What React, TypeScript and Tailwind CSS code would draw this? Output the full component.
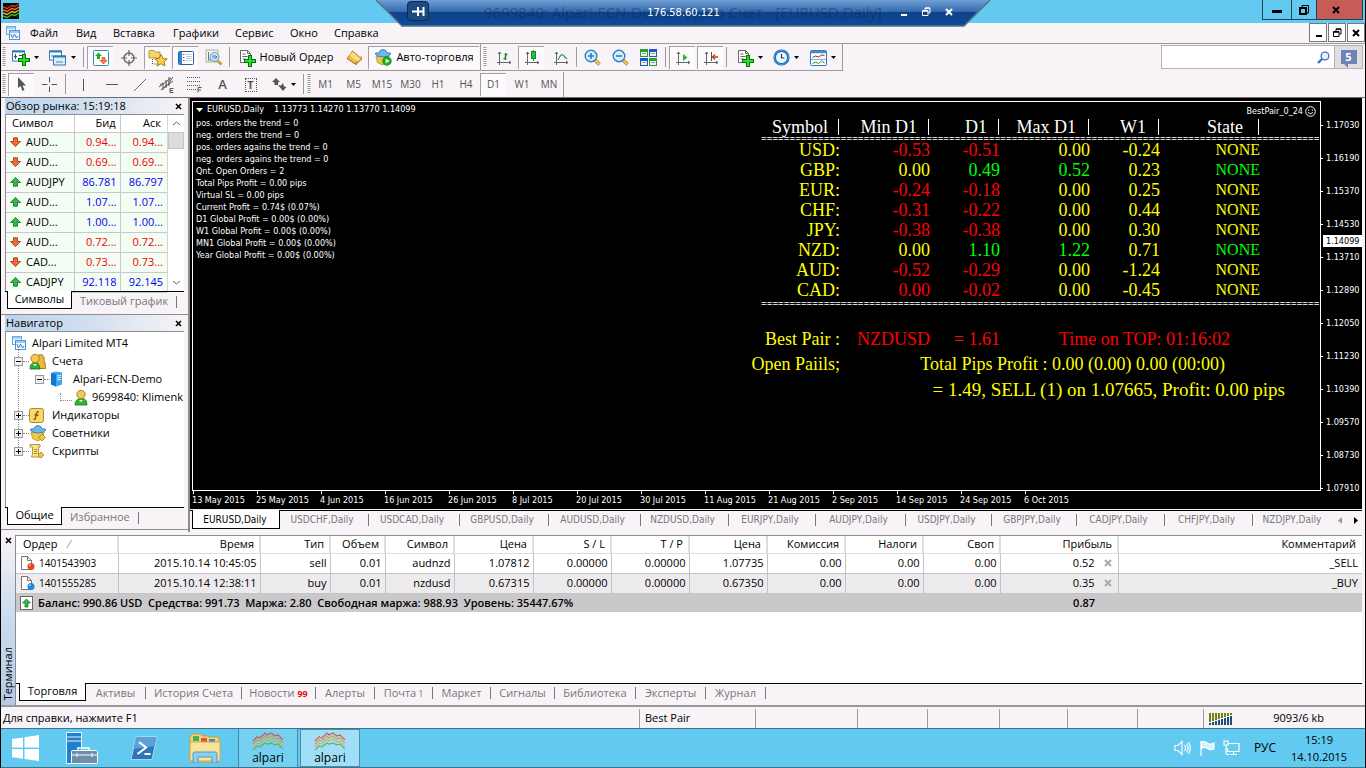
import React from "react";

type IconProps = { className?: string };

const svgBase = "shrink-0";

const ChartWindowsIcon = ({ className = "" }: IconProps) => (
  <svg viewBox="0 0 14 14" width="14" height="14" className={`${svgBase} ${className}`} fill="none">
    <rect x="0.5" y="0.5" width="9" height="8" fill="#e8f5ff" stroke="#6aaae4" />
    <path d="M0.5 2h9" stroke="#6aaae4" />
    <rect x="3.5" y="4.5" width="10" height="9" fill="#f4faff" stroke="#4a94d8" />
    <path d="M3.5 6h10" stroke="#4a94d8" />
    <path d="M5 8l1.500 4 2-4 2 4 1.500-2" stroke="#3c78d0" />
  </svg>
);

const NewChartIcon = () => (
  <svg viewBox="0 0 18 16" width="18" height="16" className={svgBase} fill="none">
    <rect x="0.500" y="1" width="12" height="10" fill="#fff" stroke="#2d7bb8" />
    <path d="M0.500 1.500h12" stroke="#2d7bb8" strokeWidth="2" />
    <path d="M3.500 4v5M2 6.500h3M7 5.500h3" stroke="#444" />
    <path d="M10 4h4v4h4v4h-4v4h-4v-4H6V8h4z" fill="#087008" />
    <path d="M11 5h2v4h4v2h-4v4h-2v-4H7V9h4z" fill="#2be02b" />
  </svg>
);

const ProfilesIcon = () => (
  <svg viewBox="0 0 18 16" width="18" height="16" className={svgBase} fill="none">
    <rect x="0.500" y="1" width="12" height="9" fill="#fff" stroke="#2d7bb8" />
    <path d="M0.500 1.500h12" stroke="#2d7bb8" strokeWidth="2" />
    <rect x="4.500" y="6" width="12" height="9" fill="#d9efff" stroke="#2d7bb8" />
    <path d="M4.500 6.500h12" stroke="#2d7bb8" strokeWidth="2" />
    <path d="M7 12h7M3 4.500v3" stroke="#5588aa" />
  </svg>
);

const MarketIcon = () => (
  <svg viewBox="0 0 16 16" width="16" height="16" className={svgBase} fill="none">
    <rect x="0.500" y="0.500" width="15" height="15" rx="1" fill="#fff" stroke="#2d86c8" />
    <path d="M5.500 2.500l3.500 3.500h-2v3h-3v-3h-2z" fill="#1fae1f" />
    <path d="M10.500 14l3.500-3.500h-2v-3h-3v3h-2z" fill="#ff7a3a" stroke="#c83a10" strokeWidth="0.600" />
  </svg>
);

const TargetIcon = () => (
  <svg viewBox="0 0 16 16" width="16" height="16" className={svgBase} fill="none" stroke="#666">
    <circle cx="8" cy="8" r="5" strokeWidth="1.500" />
    <path d="M8 0v6M8 10v6M0 8h6M10 8h6" strokeWidth="1.200" />
  </svg>
);

const FolderStarIcon = () => (
  <svg viewBox="0 0 20 18" width="20" height="18" className={svgBase}>
    <path d="M1 2.500q0-1 1-1h4l1 1.500h5v6h-11z" fill="#f6d669" stroke="#a8842a" strokeWidth="0.800" />
    <path d="M4.500 10v5h4" fill="none" stroke="#555" strokeDasharray="1 1" />
    <path d="M13 5.500l2 4 4.200.4-3.200 2.900 1 4.200-4-2.300-3.900 2.300 1-4.200-3.200-2.900 4.200-.4z" fill="#f8cf48" stroke="#9b7415" strokeWidth="0.900" />
  </svg>
);

const TerminalIcon = () => (
  <svg viewBox="0 0 16 14" width="16" height="14" className={svgBase} fill="none">
    <rect x="0.500" y="0.500" width="15" height="13" rx="1" fill="#fff" stroke="#1c62a8" />
    <path d="M2.500 1v12" stroke="#2d86d8" strokeWidth="3" />
    <path d="M5 3.500h1.500M5 6.500h1.500M5 9.500h1.500" stroke="#d02020" />
    <path d="M8 3.500h6M8 5.500h6M8 7.500h6M8 9.500h6" stroke="#b5cfe4" />
  </svg>
);

const TesterIcon = () => (
  <svg viewBox="0 0 18 17" width="18" height="17" className={svgBase} fill="none">
    <rect x="1" y="1" width="12" height="12" fill="#f2f2ee" stroke="#b3ad9a" />
    <path d="M3.500 3v8M3 11h9" stroke="#777" />
    <circle cx="9.500" cy="8" r="4.500" fill="#c5e6fb" fillOpacity=".8" stroke="#5d9dcc" />
    <path d="M8 9V6M10 10V6M11.500 9V7" stroke="#44749a" />
    <path d="M13 12l3.500 3.500" stroke="#c99a28" strokeWidth="2.500" />
  </svg>
);

const PagePlusIcon = () => (
  <svg viewBox="0 0 17 18" width="17" height="18" className={svgBase} fill="none">
    <path d="M1.500 1.500h7l3 3v9h-10z" fill="#fff" stroke="#666" />
    <path d="M8.500 1.500v3h3M3.500 5h3M3.500 7.500h5M3.500 10h3" stroke="#666" />
    <path d="M9 6h4v4h4v4h-4v4H9v-4H5v-4h4z" fill="#087008" />
    <path d="M10 7h2v4h4v2h-4v4h-2v-4H6v-2h4z" fill="#2be02b" />
  </svg>
);

const BookIcon = () => (
  <svg viewBox="0 0 17 16" width="17" height="16" className={svgBase}>
    <path d="M6.500 1l9.500 8-6 5.500-9-6z" fill="#f0bd45" stroke="#9a6c12" strokeWidth="0.800" />
    <path d="M1 8.500l9 6v-2.500l6-5.500" fill="none" stroke="#b07a18" />
    <path d="M6.500 2l8 6.500-3 3-8.500-6.500z" fill="#fbdb80" />
  </svg>
);

const HatIcon = ({ play = false }: { play?: boolean }) => (
  <svg viewBox="0 0 18 17" width="18" height="17" className={svgBase}>
    <path d="M2 7h13l-1.500 6.500-5 2.500-5-2.500z" fill="#f0c848" stroke="#aa8122" strokeWidth="0.700" />
    <path d="M5 4q.5-3.500 4-3.500t4 3.500q4-.6 4 .8-2 3.200-8 3.200t-8-3.200q0-1.400 4-.8z" fill="#6bb9e8" stroke="#2a78ac" strokeWidth="0.800" />
    {play && <circle cx="13" cy="12" r="4.300" fill="#17b01d" stroke="#08700c" strokeWidth="0.600" />}
    {play ? <path d="M11.700 9.700l4 2.300-4 2.300z" fill="#fff" /> : <path d="M13 9l3.500 3.500-3.500 3.500-3.500-3.500z" fill="#f5c53c" stroke="#a17510" strokeWidth="0.700" />}
  </svg>
);

const AxisIcon = ({ children }: { children: React.ReactNode }) => (
  <svg viewBox="0 0 16 16" width="16" height="16" className={svgBase} fill="none">
    <path d="M3.500 2v13M1 12.500h14M2 4l1.500-2 1.500 2M13 11l2 1.500-2 1.500" stroke="#666" />
    {children}
  </svg>
);

const MagnifierIcon = ({ plus = false }: { plus?: boolean }) => (
  <svg viewBox="0 0 17 17" width="17" height="17" className={svgBase} fill="none">
    <path d="M11 11l4.500 4.500" stroke="#a87714" strokeWidth="3.200" />
    <path d="M11 11l4.500 4.500" stroke="#f4cf50" strokeWidth="1.800" />
    <circle cx="7" cy="7" r="5.800" fill="#d2edfc" stroke="#2f83c8" strokeWidth="1.400" />
    <path d={plus ? "M4 7h6M7 4v6" : "M4 7h6"} stroke="#3c79ad" strokeWidth="1.600" />
  </svg>
);

const TilesIcon = () => (
  <svg viewBox="0 0 17 17" width="17" height="17" className={svgBase}>
    <rect x="0" y="0" width="8" height="8" fill="#2f9e2f" />
    <rect x="9" y="0" width="8" height="8" fill="#1f56c8" />
    <rect x="0" y="9" width="8" height="8" fill="#1f56c8" />
    <rect x="9" y="9" width="8" height="8" fill="#2f9e2f" />
    <path d="M1 3h6v4H1zM10 3h6v4h-6zM1 12h6v4H1zM10 12h6v4h-6z" fill="#e9f4e9" />
    <path d="M2 4.500h4M11 4.500h4M2 13.500h4M11 13.500h4" stroke="#8aa" />
  </svg>
);

const ClockIcon = () => (
  <svg viewBox="0 0 17 17" width="17" height="17" className={svgBase} fill="none">
    <circle cx="8.500" cy="8.500" r="6.800" fill="#eef8ff" stroke="#1468c0" strokeWidth="2.600" />
    <circle cx="8.500" cy="8.500" r="7" stroke="#54aaf0" strokeWidth="0.800" />
    <path d="M8.500 5v4h3" stroke="#333" strokeWidth="1.200" />
  </svg>
);

const TemplateIcon = () => (
  <svg viewBox="0 0 17 16" width="17" height="16" className={svgBase} fill="none">
    <rect x="0.500" y="0.500" width="16" height="15" rx="1" fill="#fff" stroke="#2d7bb8" />
    <path d="M1 2h15" stroke="#3f8fd0" strokeWidth="2.500" />
    <path d="M1 9.500h15" stroke="#7ab0d8" />
    <path d="M2.500 7.500l3-1.500 3 1 3-2 3 .5" stroke="#a02020" />
    <path d="M2.500 13.500l3-1.500 3 1.500 3-2.500 3 2" stroke="#1f8f2f" />
  </svg>
);

const UserIcon = ({ pair = false }: { pair?: boolean }) => (
  <svg viewBox="0 0 17 17" width="17" height="17" className={svgBase} strokeWidth="0.800">
    {pair && <path d="M8 15.500V9q-1-7 3.500-7.500 4.500.5 3.500 6 1.500 1.500 1.500 8z" fill="#eab83a" stroke="#8e6a14" />}
    <path d={pair ? "M1 16q0-6 4.500-6.500t5.500 6.500z" : "M3 16q0-6 6-6.500t6 6.500z"} fill="#2fb52f" stroke="#107010" />
    <circle cx={pair ? 6 : 9} cy="5.500" r="4.200" fill="#f4c94d" stroke="#94701a" />
    <path d={pair ? "M4 11l2 2 2-2" : "M7 11l2 2 2-2"} fill="#fff" />
  </svg>
);

const ServerIcon = () => (
  <svg viewBox="0 0 13 16" width="13" height="16" className={svgBase}>
    <path d="M1 2l4-1.500 7 1v12l-6 2-5-2z" fill="#3aa6f0" />
    <path d="M1 2l5 1v12.500l-5-2z" fill="#1478c8" />
    <path d="M7 5l4-.6M7 7l4-.6M7 9l4-.6" stroke="#e3f4ff" />
  </svg>
);

const FunctionIcon = () => (
  <svg viewBox="0 0 15 15" width="15" height="15" className={svgBase}>
    <rect x="0.500" y="0.500" width="14" height="14" rx="2" fill="#f7d868" stroke="#b08b25" />
    <path d="M10 4q-2.200-1-2.500 1.500l-1 4.500q-.4 1.700-2 1.300M5.500 7h4" fill="none" stroke="#7a5a10" strokeWidth="1.300" />
  </svg>
);

const ScriptIcon = () => (
  <svg viewBox="0 0 16 16" width="16" height="16" className={svgBase} fill="none">
    <path d="M1 1.500h10v2.500h-1.500v7h2v3h-9l1-3V4H1z" fill="#f9e08a" stroke="#b08b25" strokeWidth="0.900" />
    <path d="M5 6.500h3M5 8.500h3M5 10.500h3" stroke="#b08b25" />
    <path d="M12 9l3 3-3 3-3-3z" fill="#f5c53c" stroke="#a17510" strokeWidth="0.700" />
  </svg>
);

const OrderIcon = ({ color }: { color: string }) => (
  <svg viewBox="0 0 15 16" width="15" height="16" className={svgBase}>
    <path d="M1.500 1.500h6l4 4v9h-10z" fill="#fff" stroke="#777" />
    <path d="M7.500 1.500v4h4" fill="none" stroke="#777" />
    <circle cx="11" cy="11.500" r="3.500" fill={color} />
    <circle cx="10" cy="10.300" r="1" fill="#fff" fillOpacity=".6" />
  </svg>
);

const ArrowIcon = ({ up }: { up: boolean }) => (
  <svg viewBox="0 0 11 10" width="11" height="10" className={svgBase}>
    {up
      ? <path d="M5.500.5l5 5h-3v3.700h-4V5.500h-3z" fill="#2fb94a" stroke="#0c6e1e" strokeWidth="0.800" />
      : <path d="M5.500 9.500l5-5h-3V.8h-4v3.700h-3z" fill="#f06a3a" stroke="#9c2c0a" strokeWidth="0.800" />}
  </svg>
);

const Caret = () => (
  <svg viewBox="0 0 5 3" width="5" height="3" className={svgBase}>
    <path d="M0 0h5l-2.500 3z" fill="#000" />
  </svg>
);

const WaveLogo = () => (
  <svg viewBox="0 0 16 16" width="16" height="16" className={svgBase} fill="none" strokeWidth="1.400">
    <rect width="16" height="16" fill="#120c04" />
    <path d="M0 4l4 1.500 5-3 3 1 4-2.500" stroke="#e03020" />
    <path d="M0 7l4 1.500 5-3 3 1 4-2.500" stroke="#f07020" />
    <path d="M0 10l4 1.500 5-3 3 1 4-2.500" stroke="#d8c020" />
    <path d="M0 13l4 1.500 5-3 3 1 4-2.500" stroke="#50b820" />
  </svg>
);

const AlpariLogo = () => (
  <svg viewBox="0 0 32 18" width="32" height="18" className={svgBase} fill="none" strokeWidth="1.200" strokeDasharray="2 .4">
    <path d="M1 9l4-4 3 1 5-5 2 2 4-2 4 3 3-1 5 5" stroke="#e0402c" />
    <path d="M1 12l4-4 3 1 5-5 2 2 4-2 4 3 3-1 5 5" stroke="#ee8a2c" />
    <path d="M1 15l4-4 3 1 5-5 2 2 4-2 4 3 3-1 5 5" stroke="#c9b63a" />
    <path d="M1 18l4-4 3 1 5-4 2 1 4-1 4 2 3-1 5 5" stroke="#5da83c" />
  </svg>
);

const CrossIcon = ({ className = "" }: IconProps) => (
  <svg viewBox="0 0 8 8" width="8" height="8" className={`${svgBase} ${className}`}>
    <path d="M1 1l6 6M7 1l-6 6" stroke="currentColor" strokeWidth="2" />
  </svg>
);

const RestoreIcon = ({ className = "" }: IconProps) => (
  <svg viewBox="0 0 9 9" width="9" height="9" className={`${svgBase} ${className}`} fill="none" stroke="currentColor">
    <path d="M3 3V1h5v5H6.500" />
    <path d="M.5 3.500h5.500v5H.5z" />
    <path d="M.5 4.200h5.500M3 1.200h5" strokeWidth="1.300" />
  </svg>
);

const MinimizeIcon = ({ className = "" }: IconProps) => (
  <svg viewBox="0 0 9 9" width="9" height="9" className={`${svgBase} ${className}`}>
    <path d="M2 8h6" stroke="currentColor" strokeWidth="2" />
  </svg>
);

const Sep = ({ className = "" }: IconProps) => <span className={`h-5 w-px shrink-0 bg-[#9c999c] ${className}`} />;

const Gripper = ({ className = "" }: IconProps) => (
  <svg viewBox="0 0 4 20" width="4" height="20" className={`${svgBase} ${className}`}>
    <path d="M2 0v20" stroke="#9c999c" strokeWidth="3" strokeDasharray="1 1" />
  </svg>
);

type ToolProps = { label: string; className?: string; pressed?: boolean; children: React.ReactNode };

const Tool = ({ label, className = "", pressed = false, children }: ToolProps) => (
  <button
    type="button"
    aria-label={label}
    aria-pressed={pressed}
    className={`flex h-[23px] shrink-0 items-center justify-center gap-1 border-l border-t whitespace-nowrap ${pressed ? "border-[#a3a0a3] bg-[#fcfafc]" : "border-transparent"} ${className}`}
  >
    {children}
  </button>
);

const TitleBar = () => (
  <header className="flex h-[23px] items-start justify-between bg-[#62caf0] pl-0.5">
    <div className="pt-[3px]"><WaveLogo /></div>
    <div className="mr-0.5 flex h-5 border border-t-0 border-[#23424f]">
      <button type="button" aria-label="Свернуть" className="flex w-7 items-center justify-center">
        <svg viewBox="0 0 10 9" width="10" height="9"><path d="M0 6.500h10" stroke="#000" strokeWidth="3" /></svg>
      </button>
      <button type="button" aria-label="Развернуть" className="flex w-6.5 items-center justify-center border-x border-[#23424f]">
        <svg viewBox="0 0 10 10" width="10" height="10" fill="none" stroke="#000">
          <path d="M3 2V.5h6.500V8H8" />
          <path d="M1 3h6v6H1z" strokeWidth="2" />
        </svg>
      </button>
      <button type="button" aria-label="Закрыть" className="flex w-[45px] items-center justify-center bg-[#c75c56] pr-2">
        <CrossIcon />
      </button>
    </div>
  </header>
);

const RemoteBar = () => (
  <div className="absolute left-1/2 top-0 h-[27px] w-[616px] -translate-x-1/2 text-white">
    <svg viewBox="0 0 616 27" className="absolute inset-0 h-full w-full">
      <defs>
        <linearGradient id="remote" x1="0" y1="0" x2="0" y2="1">
          <stop offset="0" stopColor="#6f9fd4" />
          <stop offset="0.45" stopColor="#3569ac" />
          <stop offset="0.47" stopColor="#0d4289" />
          <stop offset="1" stopColor="#0c4c96" />
        </linearGradient>
      </defs>
      <path d="M1 0l26 26h562l26-26z" fill="url(#remote)" />
      <path d="M1 0l26 26h562l26-26" fill="none" stroke="#5c6f86" strokeWidth="1.500" />
    </svg>
    <div className="absolute inset-x-0 top-0 text-center text-[15px] leading-6 text-[#0a2450]/40">
      9699840: Alpari-ECN-Demo - Демо Счет - [EURUSD,Daily]
    </div>
    <button type="button" aria-label="Закрепить" className="absolute left-8 top-px flex h-5 w-[22px] items-center justify-center rounded-sm border border-[#0a2a50] bg-[#1d4a80]">
      <svg viewBox="0 0 13 11" width="13" height="11" fill="none" stroke="#fff" strokeWidth="2">
        <path d="M0 5.500h5M6 1v9M6 5.500h6M11.500 1v9" />
      </svg>
    </button>
    <div className="absolute inset-x-0 top-0 pl-px text-center font-['DejaVu_Sans_Condensed',sans-serif] text-[11px] leading-[25px]">
      176.58.60.121
    </div>
    <div className="absolute right-[38px] top-[7px] flex gap-[14px]">
      <button type="button" aria-label="Свернуть сеанс"><MinimizeIcon /></button>
      <button type="button" aria-label="Окно сеанса"><RestoreIcon /></button>
      <button type="button" aria-label="Закрыть сеанс"><CrossIcon /></button>
    </div>
  </div>
);

const menus = [
  { name: "Файл", className: "w-[46px]" },
  { name: "Вид", className: "w-[37px]" },
  { name: "Вставка", className: "w-[60px]" },
  { name: "Графики", className: "w-[62px]" },
  { name: "Сервис", className: "w-[55px]" },
  { name: "Окно", className: "w-[44px]" },
  { name: "Справка", className: "w-[60px]" },
];

const MenuBar = () => (
  <nav className="flex h-[21px] items-center border-b border-[#9c999c] pl-[5px]">
    <ChartWindowsIcon className="mr-[10px]" />
    {menus.map((menu) => (
      <button key={menu.name} type="button" className={`text-left text-[11px] whitespace-nowrap ${menu.className}`}>
        {menu.name}
      </button>
    ))}
    <div className="ml-auto flex gap-px self-start">
      <button type="button" aria-label="Свернуть график" className="flex h-[19px] w-[18px] items-center justify-center border border-[#777] bg-white"><MinimizeIcon /></button>
      <button type="button" aria-label="Окно графика" className="flex h-[19px] w-[18px] items-center justify-center border border-[#777] bg-white"><RestoreIcon /></button>
      <button type="button" aria-label="Закрыть график" className="flex h-[19px] w-[18px] items-center justify-center border border-[#777] bg-white"><CrossIcon /></button>
    </div>
  </nav>
);

const MainToolbar = () => (
  <div className="flex h-[27px] items-start">
    <div className="flex h-[27px] items-center border-r border-b border-[#9c999c] pr-px">
      <Gripper className="ml-px mr-0.5" />
      <Tool label="Новый график" className="w-[33px]"><NewChartIcon /><Caret /></Tool>
      <Tool label="Профили" className="w-[41px]"><ProfilesIcon /><Caret /></Tool>
      <Sep className="ml-px mr-[3px]" />
      <Tool label="Обзор рынка" pressed className="w-[26px]"><MarketIcon /></Tool>
      <Tool label="Окно данных" className="w-[31px]"><TargetIcon /></Tool>
      <Tool label="Навигатор" pressed className="mr-0.5 w-[26px]"><FolderStarIcon /></Tool>
      <Tool label="Терминал" pressed className="w-[26px]"><TerminalIcon /></Tool>
      <Tool label="Тестер стратегий" className="w-[31px]"><TesterIcon /></Tool>
      <Sep className="mr-0.5" />
      <Tool label="Новый Ордер" className="w-[107px]">
        <PagePlusIcon />
        <span className="text-[11px]">Новый Ордер</span>
      </Tool>
      <Tool label="MetaEditor" className="w-[29px]"><BookIcon /></Tool>
      <Tool label="Авто-торговля" pressed className="w-[111px]">
        <HatIcon play />
        <span className="text-[11px]">Авто-торговля</span>
      </Tool>
    </div>
    <div className="flex h-[27px] items-center border-r border-b border-[#9c999c]">
      <Gripper className="ml-0.5 mr-0.5" />
      <Tool label="Бары" className="mr-px w-[28px]">
        <AxisIcon><path d="M9.500 3v7M7.500 8.500h2M9.500 4.500h2" stroke="#188c28" strokeWidth="1.500" /></AxisIcon>
      </Tool>
      <Tool label="Свечи" pressed className="mr-0.5 w-[26px]">
        <AxisIcon><path d="M9.500 0v11" stroke="#188c28" /><rect x="7.500" y="1.500" width="4" height="7" fill="#22c03a" stroke="#188c28" /></AxisIcon>
      </Tool>
      <Tool label="Линия" className="w-[28px]">
        <AxisIcon><path d="M5 10q3-7 5-5t4 4" stroke="#2f9e4a" strokeWidth="1.200" /></AxisIcon>
      </Tool>
      <Sep className="ml-0.5 mr-px" />
      <Tool label="Увеличить" className="w-[28px]"><MagnifierIcon plus /></Tool>
      <Tool label="Уменьшить" className="w-[28px]"><MagnifierIcon /></Tool>
      <Tool label="Окна рядом" className="w-[28px]"><TilesIcon /></Tool>
      <Sep className="mr-[3px] ml-[3px]" />
      <Tool label="Автопрокрутка" pressed className="mr-0.5 w-[26px]">
        <AxisIcon><path d="M8 4l4.500 3.500-4.500 3.500z" fill="#25b83c" /></AxisIcon>
      </Tool>
      <Tool label="Сдвиг графика" pressed className="w-[26px]">
        <AxisIcon><path d="M8.500 2v9" stroke="#555" /><path d="M15 7h-5M12 4.500l-2.500 2.500 2.500 2.500" stroke="#c8401c" strokeWidth="1.400" /></AxisIcon>
      </Tool>
      <Sep className="ml-[3px] mr-[3px]" />
      <Tool label="Индикаторы" className="w-[38px]"><PagePlusIcon /><Caret /></Tool>
      <Tool label="Периоды" className="w-[35px]"><ClockIcon /><Caret /></Tool>
      <Tool label="Шаблоны" className="w-[39px]"><TemplateIcon /><Caret /></Tool>
    </div>
    <div className="ml-auto mr-0.5 mt-px flex h-6 border border-[#b5b2b5]">
      <label className="flex w-[172px] items-center bg-white pr-1">
        <input aria-label="Поиск" className="min-w-0 flex-1 px-1 text-[11px] outline-none" />
        <svg viewBox="0 0 13 13" width="13" height="13" fill="none" stroke="#3a6fd0">
          <circle cx="8" cy="5" r="3.800" fill="#eef6ff" strokeWidth="1.300" />
          <path d="M5 8l-4 4" strokeWidth="2.400" />
        </svg>
      </label>
      <button type="button" aria-label="Сообщения" className="flex w-7 items-center justify-center border-l border-[#b5b2b5] bg-[#e0dee0]">
        <span className="relative flex h-3.5 w-4 items-center justify-center bg-[#6d84b5] text-[11px] font-bold text-white">
          5
          <svg viewBox="0 0 4 4" width="4" height="4" className="absolute left-[3px] top-full"><path d="M0 0h4v4z" fill="#6d84b5" /></svg>
        </span>
      </button>
    </div>
  </div>
);

const periods = [
  { name: "M1", className: "w-[28px]" },
  { name: "M5", className: "w-[28px]" },
  { name: "M15", className: "w-[29px]" },
  { name: "M30", className: "w-[28px]" },
  { name: "H1", className: "w-[27px]" },
  { name: "H4", className: "w-[29px]" },
  { name: "D1", className: "w-[26px]" },
  { name: "W1", className: "w-[31px]" },
  { name: "MN", className: "w-[23px]" },
];

const LineToolbar = () => (
  <div className="flex h-[27px] items-center border-b border-[#6f6c6f] text-[#555]">
    <Gripper className="ml-px mr-0.5" />
    <Tool label="Курсор" pressed className="w-[26px]">
      <svg viewBox="0 0 10 15" width="10" height="15"><path d="M1 0v11l2.500-2 2 5 2-1-2-4.500h3.500z" fill="#555" /></svg>
    </Tool>
    <Tool label="Перекрестие" className="w-[30px]">
      <svg viewBox="0 0 15 15" width="15" height="15" stroke="#555"><path d="M7.500 0v5.500M7.500 9.500v5.500M0 7.500h5.500M9.500 7.500h5.500" /></svg>
    </Tool>
    <Sep className="ml-px mr-[3px]" />
    <Tool label="Вертикальная линия" className="w-[28px]"><svg viewBox="0 0 3 12" width="3" height="12" stroke="#555"><path d="M1.500 0v12" /></svg></Tool>
    <Tool label="Горизонтальная линия" className="w-[28px]"><svg viewBox="0 0 12 3" width="12" height="3" stroke="#555"><path d="M0 1.500h12" /></svg></Tool>
    <Tool label="Трендовая линия" className="w-[28px]"><svg viewBox="0 0 12 12" width="12" height="12" stroke="#666"><path d="M0 12L12 0" /></svg></Tool>
    <Tool label="Каналы" className="w-[27px]">
      <svg viewBox="0 0 16 17" width="16" height="17" fill="none" stroke="#555">
        <path d="M0 11L12 2M2 14L14 5M4 7v7M7 4v8M10 1v9M1 9l3-2M5 12l3-4M9 8l5-7" />
        <path d="M14.500 12.500h-3.500v4h3.500M11 14.500h3" />
      </svg>
    </Tool>
    <Tool label="Фибоначчи" className="w-[28px]">
      <svg viewBox="0 0 16 17" width="16" height="17" fill="none" stroke="#555">
        <path d="M0 1.500h14M0 5.500h14M0 9.500h14M0 13.500h9" strokeDasharray="1 1" />
        <path d="M14.500 11.500h-3.500v5M11 14h3" />
      </svg>
    </Tool>
    <Tool label="Текст" className="w-[28px]"><span className="text-[13px] font-semibold">A</span></Tool>
    <Tool label="Текстовая метка" className="w-[28px]">
      <span className="flex h-3.5 w-3 items-center justify-center border border-dotted border-[#555] text-[11px] font-bold leading-none">T</span>
    </Tool>
    <Tool label="Стрелки" className="w-[38px]">
      <svg viewBox="0 0 15 13" width="15" height="13" fill="#555">
        <path d="M4 0l4 4-2 .2V7H2.500V4.200L0 4z" /><path d="M6 7l3 .5L11 5l1 3.500 2.500.5-3.500 4-3-3.500z" />
      </svg>
      <Caret />
    </Tool>
    <Sep className="ml-px mr-[3px]" />
    <Gripper />
    {periods.map((period) => (
      <Tool key={period.name} label={period.name} pressed={period.name === "D1"} className={`text-[10px] ${period.className}`}>
        {period.name}
      </Tool>
    ))}
    <Sep className="ml-[3px] h-[25px]" />
  </div>
);

const quotes = [
  { symbol: "AUD...", bid: "0.94...", ask: "0.94...", up: false },
  { symbol: "AUD...", bid: "0.69...", ask: "0.69...", up: false },
  { symbol: "AUDJPY", bid: "86.781", ask: "86.797", up: true },
  { symbol: "AUD...", bid: "1.07...", ask: "1.07...", up: true },
  { symbol: "AUD...", bid: "1.00...", ask: "1.00...", up: true },
  { symbol: "AUD...", bid: "0.72...", ask: "0.72...", up: false },
  { symbol: "CAD...", bid: "0.73...", ask: "0.73...", up: false },
  { symbol: "CADJPY", bid: "92.118", ask: "92.145", up: true },
];

const PanelTitle = ({ title }: { title: string }) => (
  <div className="flex h-4 items-center justify-between bg-linear-to-r from-[#bcd3ec] via-[#d3e0ef] to-[#f7f3f7] pr-0.5 pl-px text-[11px]">
    <span>{title}</span>
    <button type="button" aria-label={`Закрыть: ${title}`}>
      <svg viewBox="0 0 7 7" width="7" height="7"><path d="M1 1l5 5M6 1l-5 5" stroke="#000" strokeWidth="1.600" /></svg>
    </button>
  </div>
);

const PanelTabs = ({ active, other, activeClass }: { active: string; other: string; activeClass: string }) => (
  <div className="flex h-5 items-start text-[11px]">
    <span className="h-px w-0.5 bg-black" />
    <button type="button" className={`h-[18px] border border-t-0 border-black bg-white ${activeClass}`}>{active}</button>
    <div className="flex h-5 flex-1 items-center border-t border-black pl-2 text-[#777]">
      <button type="button">{other}</button>
      <span className="ml-2 h-3 w-px bg-[#777]" />
    </div>
  </div>
);

const MarketWatch = () => (
  <section className="px-1">
    <PanelTitle title="Обзор рынка: 15:19:18" />
    <div className="flex h-[177px] border-t border-l border-[#8f8c8f] bg-white">
      <table className="flex-1 table-fixed border-collapse text-[11px]">
        <thead>
          <tr className="h-[17px]">
            <th className="w-[68px] border-r border-b border-[#c8c8c8] pl-1.5 text-left font-normal leading-4">Символ</th>
            <th className="w-[46px] border-r border-b border-[#c8c8c8] pr-1 text-right font-normal leading-4">Бид</th>
            <th className="w-[47px] border-b border-[#c8c8c8] pr-1.5 text-right font-normal leading-4">Аск</th>
          </tr>
        </thead>
        <tbody>
          {quotes.map((quote, i) => (
            <tr key={i} className="h-5 bg-[#f4fdf4]">
              <td className="border-r border-b border-[#c8c8c8] pl-1">
                <div className="flex items-center gap-[5px] leading-4"><ArrowIcon up={quote.up} />{quote.symbol}</div>
              </td>
              <td className={`border-r border-b border-[#c8c8c8] pr-[3px] text-right leading-4 ${quote.up ? "text-[#0000ee]" : "text-[#ee0000]"}`}>{quote.bid}</td>
              <td className={`border-b border-[#c8c8c8] pr-1 text-right leading-4 ${quote.up ? "text-[#0000ee]" : "text-[#ee0000]"}`}>{quote.ask}</td>
            </tr>
          ))}
        </tbody>
      </table>
      <div className="flex w-[17px] flex-col items-center justify-between border-l border-[#d5d5d5] py-1">
        <svg viewBox="0 0 9 9" width="9" height="9" fill="none" stroke="#666"><path d="M1 6l3.500-3 3.500 3" /></svg>
        <span className="mt-1 h-[17px] w-4 border border-[#c4c4c4] bg-[#dcdcdc]" />
        <span className="flex-1" />
        <svg viewBox="0 0 9 9" width="9" height="9" fill="none" stroke="#666"><path d="M1 3l3.500 3 3.500-3" /></svg>
      </div>
    </div>
    <PanelTabs active="Символы" other="Тиковый график" activeClass="w-[65px]" />
  </section>
);

const Expander = ({ open }: { open: boolean }) => (
  <button type="button" aria-label={open ? "Свернуть" : "Развернуть"} className="flex h-[9px] w-[9px] shrink-0 items-center justify-center border border-[#999] bg-[#f1f1f1]">
    <svg viewBox="0 0 5 5" width="5" height="5" stroke="#000"><path d={open ? "M0 2.500h5" : "M0 2.500h5M2.500 0v5"} /></svg>
  </button>
);

const Dots = () => <span className="w-1.5 shrink-0 border-t border-dotted border-[#888]" />;

const Navigator = () => (
  <section className="flex flex-1 flex-col px-1">
    <PanelTitle title="Навигатор" />
    <div className="relative flex-1 overflow-hidden border-t border-l border-[#8f8c8f] bg-white pt-0.5 text-[11px] whitespace-nowrap">
      <span className="absolute left-3 top-[18px] h-[101px] border-l border-dotted border-[#888]" />
      <div className="flex h-[18px] items-center gap-1.5 pl-1.5"><ChartWindowsIcon />Alpari Limited MT4</div>
      <div className="relative flex h-[18px] items-center pl-2"><Expander open /><Dots /><UserIcon pair /><span className="pl-1.5">Счета</span></div>
      <div className="flex h-[18px] items-center pl-[29px]"><Expander open /><Dots /><ServerIcon /><span className="pl-2.5">Alpari-ECN-Demo</span></div>
      <div className="flex h-[18px] items-center pl-[54px]"><span className="h-2 w-3 shrink-0 border-b border-l border-dotted border-[#888]" /><UserIcon /><span className="pl-[3px]">9699840: Klimenk</span></div>
      <div className="relative flex h-[18px] items-center pl-2"><Expander open={false} /><Dots /><FunctionIcon /><span className="pl-2">Индикаторы</span></div>
      <div className="relative flex h-[18px] items-center pl-2"><Expander open={false} /><Dots /><HatIcon /><span className="pl-[5px]">Советники</span></div>
      <div className="relative flex h-[18px] items-center pl-2"><Expander open={false} /><Dots /><ScriptIcon /><span className="pl-[7px]">Скрипты</span></div>
    </div>
    <PanelTabs active="Общие" other="Избранное" activeClass="w-[55px]" />
  </section>
);

const comments = [
  "pos. orders the trend = 0",
  "neg. orders the trend = 0",
  "pos. orders agains the trend = 0",
  "neg. orders agains the trend = 0",
  "Qnt. Open Orders = 2",
  "Total Pips Profit = 0.00 pips",
  "Virtual SL = 0.00 pips",
  "Current Profit = 0.74$ (0.07%)",
  "D1 Global Profit = 0.00$ (0.00%)",
  "W1 Global Profit = 0.00$ (0.00%)",
  "MN1 Global Profit = 0.00$ (0.00%)",
  "Year Global Profit = 0.00$ (0.00%)",
];

const YELLOW = "text-[#ffff00]";
const RED = "text-[#ff0000]";
const GREEN = "text-[#00ff00]";

const strengths = [
  { name: "USD:", min: "-0.53", minColor: RED, day: "-0.51", dayColor: RED, max: "0.00", maxColor: YELLOW, week: "-0.24", stateColor: YELLOW },
  { name: "GBP:", min: "0.00", minColor: YELLOW, day: "0.49", dayColor: GREEN, max: "0.52", maxColor: GREEN, week: "0.23", stateColor: GREEN },
  { name: "EUR:", min: "-0.24", minColor: RED, day: "-0.18", dayColor: RED, max: "0.00", maxColor: YELLOW, week: "0.25", stateColor: YELLOW },
  { name: "CHF:", min: "-0.31", minColor: RED, day: "-0.22", dayColor: RED, max: "0.00", maxColor: YELLOW, week: "0.44", stateColor: YELLOW },
  { name: "JPY:", min: "-0.38", minColor: RED, day: "-0.38", dayColor: RED, max: "0.00", maxColor: YELLOW, week: "0.30", stateColor: YELLOW },
  { name: "NZD:", min: "0.00", minColor: YELLOW, day: "1.10", dayColor: GREEN, max: "1.22", maxColor: GREEN, week: "0.71", stateColor: GREEN },
  { name: "AUD:", min: "-0.52", minColor: RED, day: "-0.29", dayColor: RED, max: "0.00", maxColor: YELLOW, week: "-1.24", stateColor: YELLOW },
  { name: "CAD:", min: "0.00", minColor: RED, day: "-0.02", dayColor: RED, max: "0.00", maxColor: YELLOW, week: "-0.45", stateColor: YELLOW },
];

const columns = [
  { name: "Symbol", className: "w-[79px]", gap: "pr-[10px]" },
  { name: "Min D1", className: "w-[90px]", gap: "pr-[11px]" },
  { name: "D1", className: "w-[70px]", gap: "pr-[11px]" },
  { name: "Max D1", className: "w-[90px]", gap: "pr-[12px]" },
  { name: "W1", className: "w-[70px]", gap: "pr-[12px]" },
  { name: "State", className: "w-[100px]", gap: "pr-[15px]" },
];

const Rule = () => (
  <div className="h-1.5 text-[10px] leading-[6px] font-bold whitespace-nowrap text-white">{"=".repeat(98)}</div>
);

const StrengthTable = () => (
  <div className="w-[559px] shrink-0 pt-[15px] font-['Liberation_Serif',serif] text-[18px] text-[#ffff00]">
    <table className="table-fixed border-collapse text-right leading-5 whitespace-nowrap">
      <thead>
        <tr className="text-white">
          {columns.map((column) => (
            <th key={column.name} className={`p-0 font-normal ${column.className}`}>
              <div className="flex items-center justify-end pr-px">
                <span className={column.gap}>{column.name}</span>
                <span className="h-4 w-px bg-white" />
              </div>
            </th>
          ))}
        </tr>
      </thead>
    </table>
    <div className="-mt-px -mb-0.5"><Rule /></div>
    <table className="table-fixed border-collapse text-right leading-5 whitespace-nowrap">
      <tbody>
        {strengths.map((row) => (
          <tr key={row.name} className="h-5">
            <td className="w-[79px] p-0">{row.name}</td>
            <td className={`w-[90px] p-0 ${row.minColor}`}>{row.min}</td>
            <td className={`w-[70px] p-0 ${row.dayColor}`}>{row.day}</td>
            <td className={`w-[90px] p-0 ${row.maxColor}`}>{row.max}</td>
            <td className="w-[70px] p-0">{row.week}</td>
            <td className={`w-[100px] p-0 text-[16px] ${row.stateColor}`}>NONE</td>
          </tr>
        ))}
      </tbody>
    </table>
    <div className="pt-px"><Rule /></div>
    <div className="flex pt-5 leading-[25px] whitespace-nowrap text-[#ff0000]">
      <span className="w-[79px] text-right text-[#ffff00]">Best Pair :</span>
      <span className="w-[90px] text-right">NZDUSD</span>
      <span className="w-[70px] text-right">= 1.61</span>
      <span className="w-[230px] text-right">Time on TOP: 01:16:02</span>
    </div>
    <div className="flex leading-[25px] whitespace-nowrap">
      <span className="flex w-[79px] justify-end">Open Paiils;</span>
      <span className="w-[385px] text-right">Total Pips Profit : 0.00 (0.00) 0.00 (00:00)</span>
    </div>
    <div className="pr-[35px] text-right text-[19px] leading-[25px] whitespace-nowrap">= 1.49, SELL (1) on 1.07665, Profit: 0.00 pips</div>
  </div>
);

const prices = ["1.17030", "1.16190", "1.15370", "1.14530", "1.13710", "1.12890", "1.12050", "1.11230", "1.10390", "1.09570", "1.08730", "1.07910"];

const dates = ["13 May 2015", "25 May 2015", "4 Jun 2015", "16 Jun 2015", "26 Jun 2015", "8 Jul 2015", "20 Jul 2015", "30 Jul 2015", "11 Aug 2015", "21 Aug 2015", "2 Sep 2015", "14 Sep 2015", "24 Sep 2015", "6 Oct 2015"];

const Chart = () => (
  <div className="flex flex-1 flex-col bg-black font-['DejaVu_Sans_Condensed',sans-serif] text-[9px] text-white">
    <div className="flex flex-1 pt-[3px]">
      <div className="relative ml-0.5 flex flex-1 justify-between border border-white">
        <div className="pl-[3px]">
          <div className="flex h-[15px] items-center gap-1">
            <svg viewBox="0 0 7 4" width="7" height="4"><path d="M0 0h7l-3.500 4z" fill="#fff" /></svg>
            <span>EURUSD,Daily</span>
            <span className="pl-1.5">1.13773 1.14270 1.13770 1.14099</span>
          </div>
          {comments.map((line) => (
            <div key={line} className="h-3 leading-3">{line}</div>
          ))}
        </div>
        <StrengthTable />
        <div className="absolute right-1 top-[3px] flex items-center gap-0.5">
          <span>BestPair_0_24</span>
          <svg viewBox="0 0 11 11" width="11" height="11" fill="none" stroke="#fff">
            <circle cx="5.500" cy="5.500" r="4.800" />
            <path d="M3 6.500q2.500 2.500 5 0M3.700 3.500v1.300M7.300 3.500v1.300" />
          </svg>
        </div>
      </div>
      <div className="relative -mb-4 flex w-[41px] flex-col pt-2">
        {prices.map((price) => (
          <div key={price} className="flex h-[33px] items-center gap-[3px]">
            <span className="h-px w-0.5 bg-white" />
            {price}
          </div>
        ))}
        <span className="absolute inset-x-0 left-0.5 top-[134px] h-3 bg-white pl-[3px] leading-3 text-black">1.14099</span>
      </div>
    </div>
    <div className="flex h-[18px] pl-[3px]">
      {dates.map((date) => (
        <div key={date} className="w-16 shrink-0">
          <span className="block h-[3px] w-px bg-white" />
          <span className="-ml-px block leading-3 whitespace-nowrap">{date}</span>
        </div>
      ))}
    </div>
  </div>
);

const chartTabs = [
  { name: "USDCHF,Daily", className: "w-[89px]" },
  { name: "USDCAD,Daily", className: "w-[91px]" },
  { name: "GBPUSD,Daily", className: "w-[89px]" },
  { name: "AUDUSD,Daily", className: "w-[92px]" },
  { name: "NZDUSD,Daily", className: "w-[88px]" },
  { name: "EURJPY,Daily", className: "w-[87px]" },
  { name: "AUDJPY,Daily", className: "w-[90px]" },
  { name: "USDJPY,Daily", className: "w-[86px]" },
  { name: "GBPJPY,Daily", className: "w-[85px]" },
  { name: "CADJPY,Daily", className: "w-[88px]" },
  { name: "CHFJPY,Daily", className: "w-[88px]" },
  { name: "NZDJPY,Daily", className: "w-[82px]" },
];

const ChartTabs = () => (
  <div className="flex h-[23px] items-start pt-px font-['DejaVu_Sans_Condensed',sans-serif] text-[10px]">
    <span className="h-px w-0.5 bg-black" />
    <button type="button" className="h-[19px] w-[88px] border border-t-0 border-black bg-white pr-0.5">EURUSD,Daily</button>
    <div className="flex min-w-0 flex-1 items-center overflow-hidden border-t border-black pt-[3px] text-[#777]">
      {chartTabs.map((tab, i) => (
        <button key={tab.name} type="button" className={`h-3 shrink-0 pr-1 leading-3 ${tab.className} ${i < chartTabs.length - 1 ? "border-r border-[#777]" : ""}`}>
          {tab.name}
        </button>
      ))}
      <div className="ml-auto flex gap-3 pr-1">
        <svg viewBox="0 0 4 7" width="4" height="7"><path d="M4 0v7l-4-3.500z" fill="#999" /></svg>
        <svg viewBox="0 0 4 7" width="4" height="7"><path d="M0 0v7l4-3.500z" fill="#000" /></svg>
      </div>
    </div>
  </div>
);

const orderColumns = [
  { name: "Время", className: "w-[142px]" },
  { name: "Тип", className: "w-[70px]" },
  { name: "Объем", className: "w-[55px]" },
  { name: "Символ", className: "w-[69px]" },
  { name: "Цена", className: "w-[79px]" },
  { name: "S / L", className: "w-[78px]" },
  { name: "T / P", className: "w-[78px]" },
  { name: "Цена", className: "w-[78px]" },
  { name: "Комиссия", className: "w-[78px]" },
  { name: "Налоги", className: "w-[78px]" },
  { name: "Своп", className: "w-[77px]" },
];

const orders = [
  { id: "1401543903", color: "#e8481c", cells: ["2015.10.14 10:45:05", "sell", "0.01", "audnzd", "1.07812", "0.00000", "0.00000", "1.07735", "0.00", "0.00", "0.00"], profit: "0.52", comment: "_SELL", row: "bg-white" },
  { id: "1401555285", color: "#2088d8", cells: ["2015.10.14 12:38:11", "buy", "0.01", "nzdusd", "0.67315", "0.00000", "0.00000", "0.67350", "0.00", "0.00", "0.00"], profit: "0.35", comment: "_BUY", row: "bg-[#eeebee]" },
];

const terminalTabs = [
  { name: "Активы", className: "w-[60px]" },
  { name: "История Счета", className: "w-[96px]" },
  { name: "Новости", className: "w-[74px]", badge: "99" },
  { name: "Алерты", className: "w-[59px]" },
  { name: "Почта", className: "w-[58px]", sub: "1" },
  { name: "Маркет", className: "w-[58px]" },
  { name: "Сигналы", className: "w-[64px]" },
  { name: "Библиотека", className: "w-[81px]" },
  { name: "Эксперты", className: "w-[70px]" },
  { name: "Журнал", className: "w-[60px]" },
];

const Terminal = () => (
  <section className="flex h-[173px] pt-[3px]">
    <div className="flex w-3.5 flex-col items-center bg-linear-to-b from-[#f7f3f7] via-[#c9dbee] to-[#b5cbe4]">
      <button type="button" aria-label="Закрыть терминал" className="pt-0.5">
        <svg viewBox="0 0 7 7" width="7" height="7"><path d="M1 1l5 5M6 1l-5 5" stroke="#000" strokeWidth="1.600" /></svg>
      </button>
      <span className="mt-auto mb-[5px] rotate-180 text-[11px] leading-[14px] [writing-mode:vertical-rl]">Терминал</span>
    </div>
    <div className="mr-[3px] flex min-w-0 flex-1 flex-col border-t border-l border-[#8f8c8f]">
      <div className="flex-1 bg-white">
        <table className="w-full table-fixed border-collapse text-right text-[11px] leading-4 whitespace-nowrap">
          <thead>
            <tr className="h-[17px]">
              <th className="w-[102px] border-r-2 border-b border-[#dedade] p-0 pl-[7px] text-left font-normal">Ордер <span className="pl-2 text-[#888]">⁄</span></th>
              {orderColumns.map((column, i) => (
                <th key={i} className={`border-r-2 border-b border-[#dedade] p-0 pr-[5px] font-normal ${column.className}`}>{column.name}</th>
              ))}
              <th className="w-[118px] border-r-2 border-b border-[#dedade] p-0 pr-[5px] font-normal">Прибыль</th>
              <th className="border-b border-[#dedade] p-0 pr-1.5 font-normal">Комментарий</th>
            </tr>
          </thead>
          <tbody>
            {orders.map((order) => (
              <tr key={order.id} className={`h-5 ${order.row}`}>
                <td className="border-r border-b border-[#c6c3c6] p-0 pl-1">
                  <div className="flex items-center gap-1 text-[10px]"><OrderIcon color={order.color} />{order.id}</div>
                </td>
                {order.cells.map((cell, i) => (
                  <td key={i} className="border-r border-b border-[#c6c3c6] p-0 pr-[3px]">{cell}</td>
                ))}
                <td className="border-r border-b border-[#c6c3c6] p-0 pr-1.5">
                  <div className="flex items-center justify-end gap-[9px]">
                    {order.profit}
                    <button type="button" aria-label={`Закрыть ордер ${order.id}`}><CrossIcon className="text-[#aaa]" /></button>
                  </div>
                </td>
                <td className="border-b border-[#c6c3c6] p-0 pr-1">{order.comment}</td>
              </tr>
            ))}
            <tr className="h-[19px] bg-[#cac8ca] font-semibold">
              <td colSpan={12} className="p-0 pl-1 text-left">
                <div className="flex items-center gap-[5px] whitespace-pre">
                  <svg viewBox="0 0 13 14" width="13" height="14" className={svgBase}>
                    <rect x="0.500" y="0.500" width="12" height="13" fill="#fff" stroke="#666" />
                    <path d="M6.500 3l4 4h-2.500v4h-3V7H2.500z" fill="#2fb94a" stroke="#0c6e1e" strokeWidth="0.700" />
                  </svg>
                  {"Баланс: 990.86 USD  Средства: 991.73  Маржа: 2.80  Свободная маржа: 988.93  Уровень: 35447.67%"}
                </div>
              </td>
              <td className="p-0 pr-[23px]">0.87</td>
              <td />
            </tr>
          </tbody>
        </table>
      </div>
      <div className="flex h-[22px] items-start text-[11px]">
        <span className="h-px w-[3px] bg-black" />
        <button type="button" className="h-[18px] w-[67px] border border-t-0 border-black bg-white">Торговля</button>
        <div className="flex flex-1 items-center border-t border-black pt-[3px] text-[#777]">
          {terminalTabs.map((tab) => (
            <button key={tab.name} type="button" className={`h-3 shrink-0 border-r border-[#777] leading-3 whitespace-nowrap ${tab.className}`}>
              {tab.name}
              {tab.badge && <span className="pl-[3px] text-[9px] font-bold text-[#e01010]">{tab.badge}</span>}
              {tab.sub && <span className="pl-0.5 text-[9px]">{tab.sub}</span>}
            </button>
          ))}
        </div>
      </div>
    </div>
  </section>
);

const StatusBar = () => (
  <footer className="flex h-[23px] items-center border-t-2 border-[#9c999c] pt-0.5 text-[11px] whitespace-nowrap">
    <span className="w-[638px] pl-0.5">Для справки, нажмите F1</span>
    <Sep className="h-4" />
    <span className="w-[115px] pl-[5px]">Best Pair</span>
    <Sep className="mr-[101px] h-4" />
    <Sep className="mr-[69px] h-4" />
    <Sep className="mr-[71px] h-4" />
    <Sep className="mr-[67px] h-4" />
    <Sep className="mr-[69px] h-4" />
    <Sep className="mr-[65px] h-4" />
    <Sep className="mr-[5px] h-4" />
    <svg viewBox="0 0 24 12" width="24" height="12" fill="none" strokeWidth="2">
      <path d="M1 0v9M4 0v8M7 0v7M10 0v6M13 0v5M16 0v4M19 0v3M22 0v2" stroke="#6d8410" />
      <path d="M1 10v2M4 9v3M7 8v4M10 7v5M13 6v6M16 5v7M19 4v8M22 3v9" stroke="#1d4f78" />
    </svg>
    <span className="ml-auto pr-[41px]">9093/6 kb</span>
  </footer>
);

const TaskBar = () => (
  <div className="flex h-10 items-center border-t border-b border-[#3e7285] bg-[#62caf0]">
    <button type="button" aria-label="Пуск" className="ml-[11px] w-7">
      <svg viewBox="0 0 28 26" width="28" height="26" fill="#fff">
        <path d="M0 4l11-1.600v10.100H0zM12.500 2.200L27 0v12.500H12.500zM0 14h11v9.800L0 22.200zM12.500 14H27v12l-14.500-2z" />
      </svg>
    </button>
    <button type="button" aria-label="Диспетчер серверов" className="ml-[26px]">
      <svg viewBox="0 0 32 32" width="32" height="32">
        <path d="M.5.500h15v31H.5z" fill="#1f80d0" stroke="#e3f4fc" />
        <path d="M.5 5h15M.5 9h15" stroke="#e3f4fc" />
        <path d="M12 19V16h11v3" fill="none" stroke="#fff" strokeWidth="1.500" />
        <rect x="5.500" y="18.500" width="26" height="13" rx="1" fill="#6f8ea8" stroke="#fff" />
        <path d="M6 23h25M11 21v4M26 21v4" stroke="#fff" />
      </svg>
    </button>
    <button type="button" aria-label="PowerShell" className="ml-[32px]">
      <svg viewBox="0 0 28 24" width="28" height="24">
        <path d="M6 .5h21l-5 23H1z" fill="#2d77b8" stroke="#a5d8f0" />
        <path d="M6 1h20.500l-2 9-20.500 3z" fill="#5aa2d6" />
        <path d="M9 6l7 5.500-8.500 6.500M14.500 18h6" fill="none" stroke="#fff" strokeWidth="2.200" />
      </svg>
    </button>
    <button type="button" aria-label="Проводник" className="ml-[31px]">
      <svg viewBox="0 0 32 30" width="32" height="30">
        <path d="M1 4l2-3h9l1 2h6l1 1h10v25H1z" fill="#f4d272" stroke="#c79f3c" />
        <path d="M4 3h6v5H4z" fill="#45b058" /><path d="M12 5h6v4h-6z" fill="#d9534a" /><path d="M20 6h6v4h-6z" fill="#3d8ee0" />
        <path d="M1 9h30v19H1z" fill="#f9e39a" stroke="#d0aa48" />
        <path d="M4 30v-9q0-2 2-2h20q2 0 2 2v9h-5v-6H9v6z" fill="#8dcdf0" stroke="#4b9bc8" />
      </svg>
    </button>
    <button type="button" className="ml-[17px] flex h-[38px] w-[60px] flex-col items-center border-x border-[#3e8ba6] bg-[#75d0f1] pt-[3px] text-[12px] leading-4">
      <AlpariLogo />alpari
    </button>
    <button type="button" className="ml-0.5 flex h-[38px] w-[60px] flex-col items-center border border-[#4a8fa8] bg-[#a0dff7] pt-0.5 text-[12px] leading-4">
      <AlpariLogo />alpari
    </button>
    <div className="ml-auto flex items-center">
      <svg viewBox="0 0 17 16" width="17" height="16" fill="none" stroke="#fff" strokeWidth="1.200">
        <path d="M1 5.500h3l4-4v13l-4-4H1z" stroke="#f4fbff" /><path d="M10.500 5q2 3 0 6M12.500 3.500q3 4.500 0 9M14.500 2q3.500 6 0 12" />
      </svg>
      <svg viewBox="0 0 16 16" width="16" height="16" fill="none" stroke="#fff" strokeWidth="1.200" className="ml-2">
        <path d="M2 1v15" /><path d="M2.500 2q3-1 5.500 1t7 0v6q-4 1.500-6.500-.5t-6 0z" fill="#d9f2fc" />
      </svg>
      <svg viewBox="0 0 17 16" width="17" height="16" fill="none" stroke="#fff" strokeWidth="1.200" className="ml-2">
        <path d="M5.500 3.500H16v8H4.500V8M7 14.500h7M10.500 11.500v3M1 1h4v4H1zM3 5v8q0 1.500 3 1.500" />
      </svg>
      <span className="w-[50px] text-center text-[12px]">РУС</span>
      <div className="mr-[17px] w-[58px] text-center text-[11px] leading-[17px]">
        <div>15:19</div>
        <div>14.10.2015</div>
      </div>
    </div>
  </div>
);

const App = () => {
  return (
    <div className="relative flex min-h-screen flex-col border-x border-black bg-[#f7f3f7] font-['Open_Sans','Noto_Sans',sans-serif] text-black">
      <TitleBar />
      <RemoteBar />
      <MenuBar />
      <MainToolbar />
      <LineToolbar />
      <main className="flex flex-1">
        <aside className="flex w-[189px] shrink-0 flex-col border-r-2 border-[#8f8c8f]">
          <MarketWatch />
          <div className="mt-[3px] h-px bg-[#8f8c8f]" />
          <Navigator />
          <div className="mt-0.5 mb-0.5 h-px bg-[#8f8c8f]" />
        </aside>
        <div className="mr-[3px] flex min-w-0 flex-1 flex-col">
          <Chart />
          <ChartTabs />
        </div>
      </main>
      <Terminal />
      <StatusBar />
      <TaskBar />
    </div>
  );
};

export default App;
